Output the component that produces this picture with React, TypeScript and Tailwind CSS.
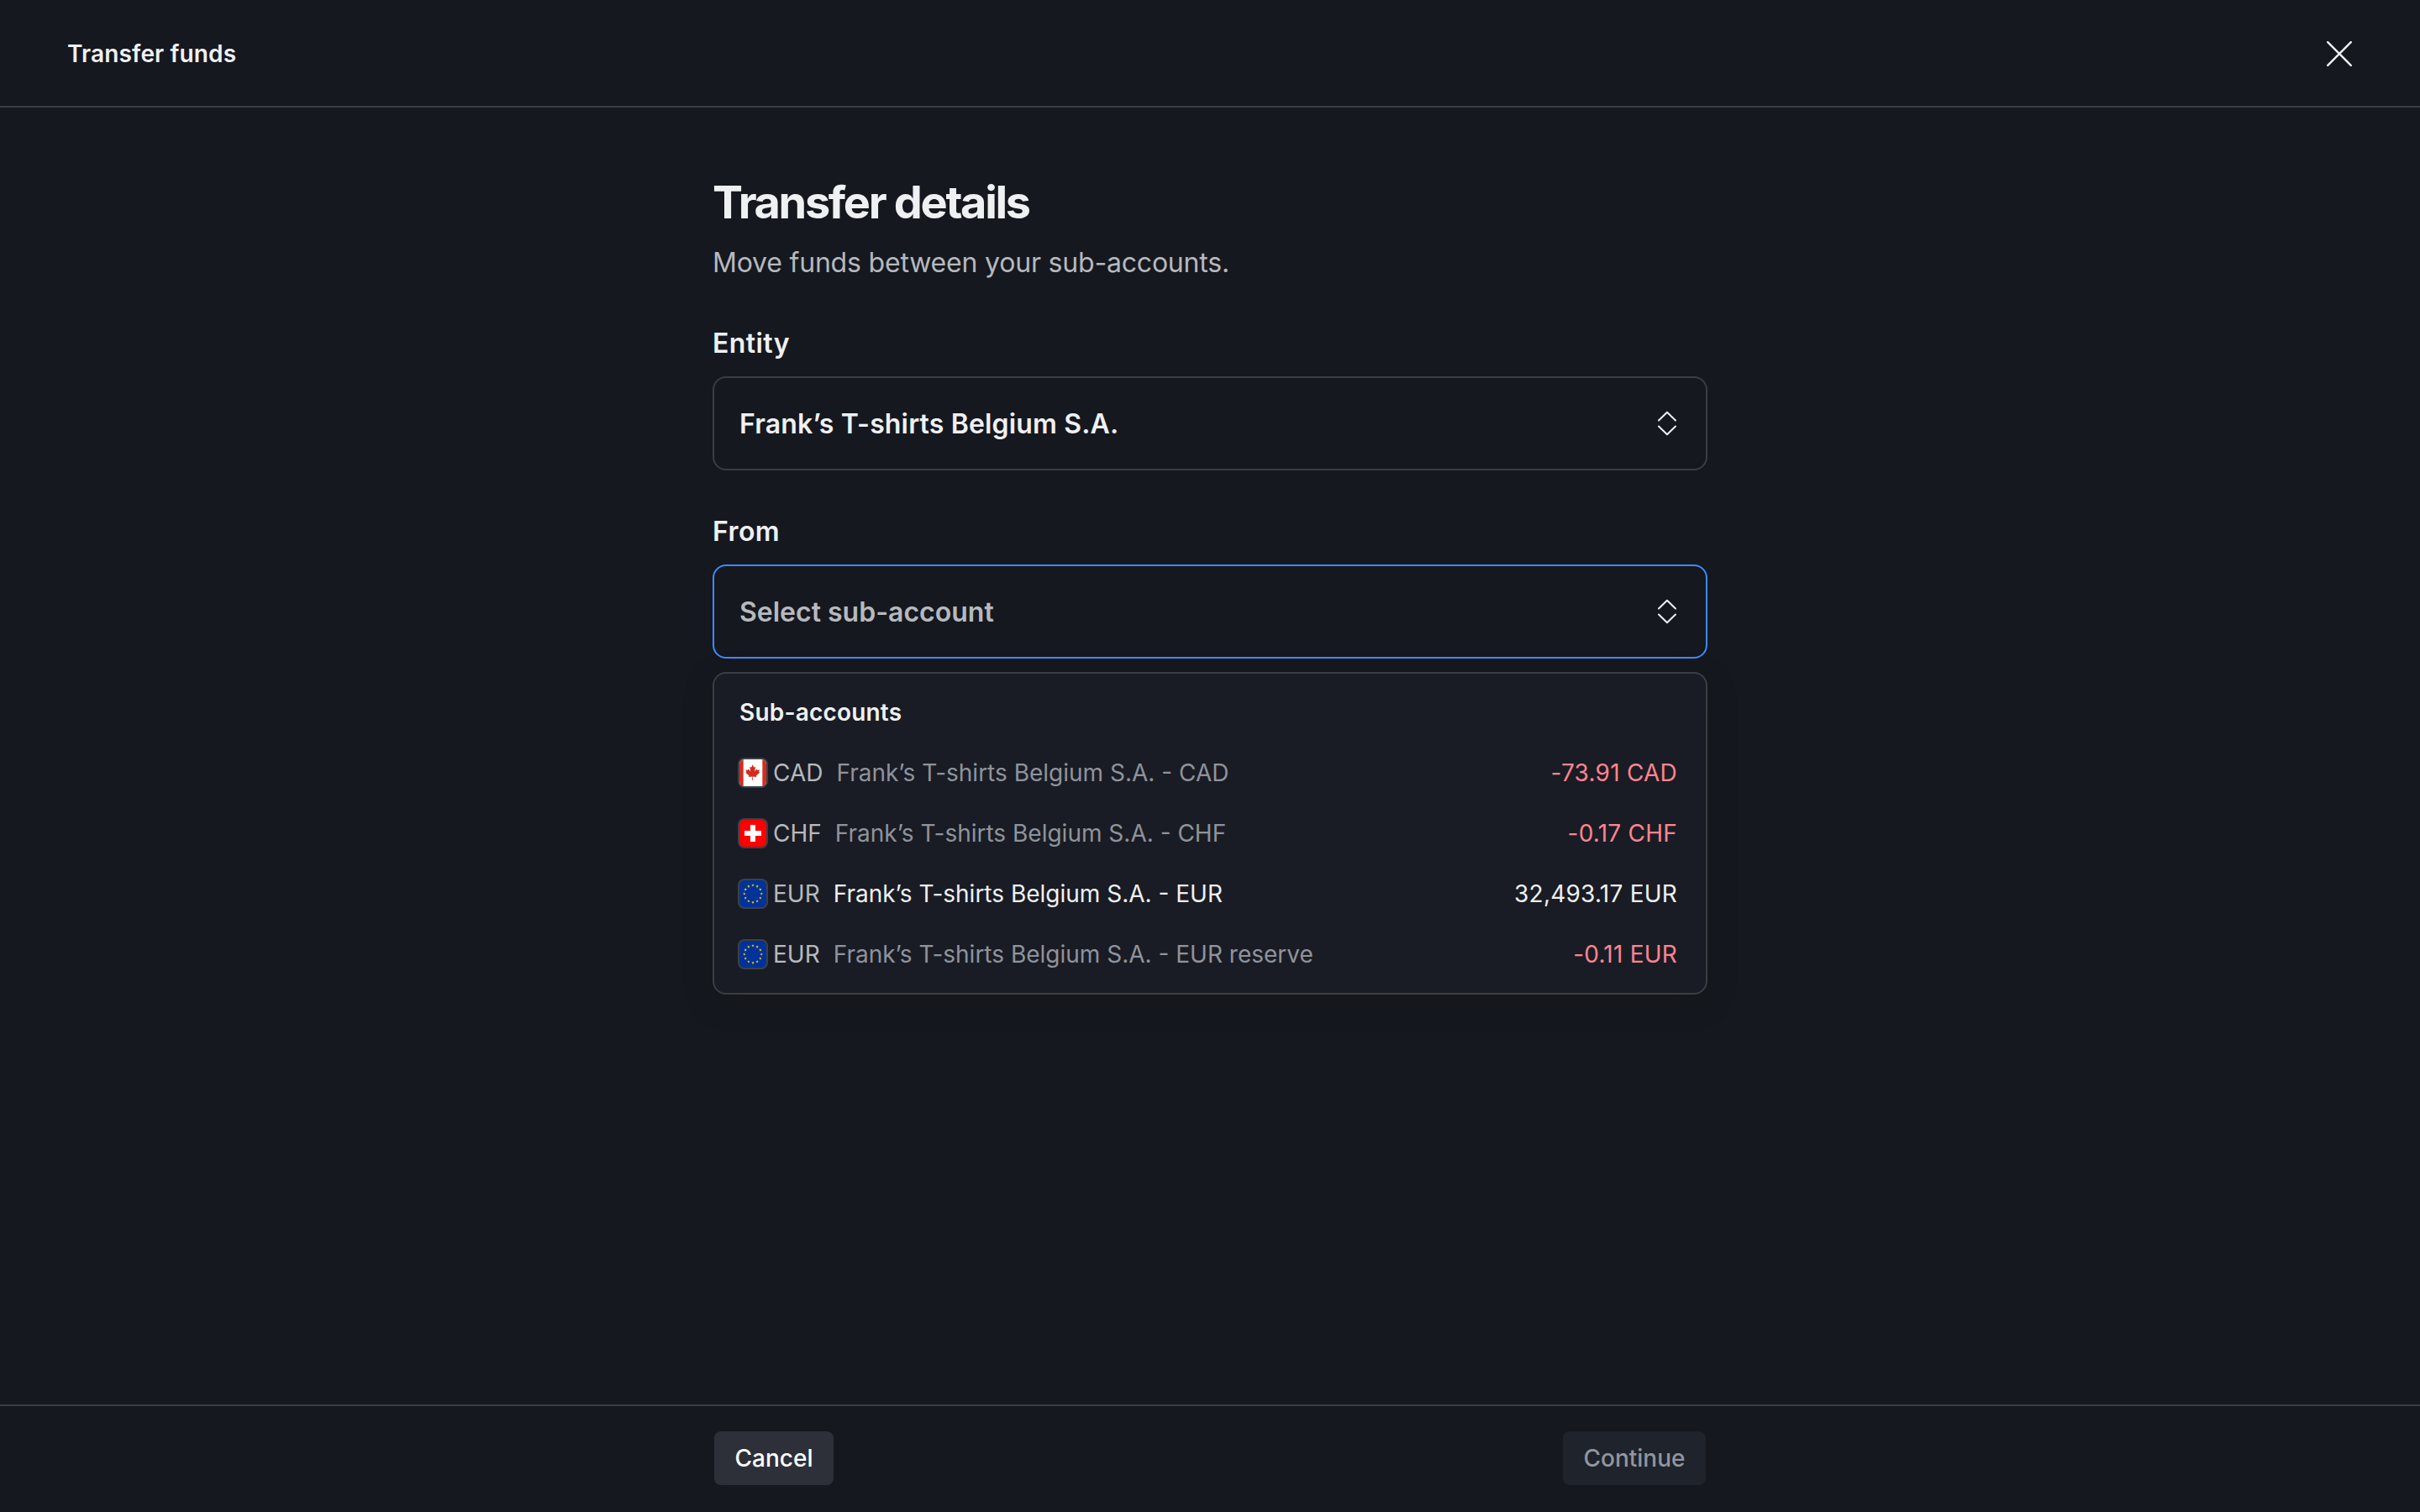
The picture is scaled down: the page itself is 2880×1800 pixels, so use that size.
import { ReactNode, useState } from 'react'

type Account = {
  id: string
  currency: string
  name: string
  balance: string
  flag: 'ca' | 'ch' | 'eu'
  negative?: boolean
}

const ACCOUNTS: Account[] = [
  { id: 'cad', currency: 'CAD', name: 'Frank’s T-shirts Belgium S.A. - CAD', balance: '-73.91 CAD', flag: 'ca', negative: true },
  { id: 'chf', currency: 'CHF', name: 'Frank’s T-shirts Belgium S.A. - CHF', balance: '-0.17 CHF', flag: 'ch', negative: true },
  { id: 'eur', currency: 'EUR', name: 'Frank’s T-shirts Belgium S.A. - EUR', balance: '32,493.17 EUR', flag: 'eu' },
  { id: 'eur-reserve', currency: 'EUR', name: 'Frank’s T-shirts Belgium S.A. - EUR reserve', balance: '-0.11 EUR', flag: 'eu', negative: true },
]

// five-pointed star around 0,0
const STAR = '0,-22 5.2,-7.1 20.9,-6.8 8.4,2.7 12.9,17.8 0,8.8 -12.9,17.8 -8.4,2.7 -20.9,-6.8 -5.2,-7.1'

function Flag({ code }: { code: Account['flag'] }) {
  return (
    <span className="block size-9 shrink-0 rounded-lg bg-[#3d4047] p-0.5">
      <svg viewBox="80 0 480 480" className="size-8 rounded-md">
        {code === 'ca' && (
          <>
            <path fill="#fff" d="M80 0h480v480H80z" />
            <path
              fill="#d52b1e"
              d="M-19.7 0h169.8v480H-19.7zm509.5 0h169.8v480H489.9zM201 232l-13.3 4.4 61.4 54c4.7 13.7-1.6 17.8-5.6 25l66.6-8.4-1.6 67 13.9-.3-3.1-66.6 66.7 8c-4.1-8.7-7.8-13.3-4-27.2l61.3-51-10.7-4c-8.8-6.8 3.8-32.6 5.6-48.9 0 0-35.7 12.3-38 5.8l-9.2-17.5-32.6 35.8c-3.5.9-5-.5-5.9-3.5l15-74.8-23.8 13.4c-2 .9-4 .1-5.2-2.2l-23-46-23.6 47.8c-1.8 1.7-3.6 1.9-5 .7L264 130.8l13.7 74.1c-1.1 3-3.7 3.8-6.7 2.2l-31.2-35.3c-4 6.5-6.8 17.1-12.2 19.5-5.4 2.3-23.5-4.5-35.6-7 4.2 14.8 17 39.6 9 47.7z"
            />
          </>
        )}
        {code === 'ch' && (
          <>
            <path fill="#f00" d="M80 0h480v480H80z" />
            <path fill="#fff" d="M170 195h300v90H170zM275 90h90v300h-90z" />
          </>
        )}
        {code === 'eu' && (
          <>
            <path fill="#039" d="M80 0h480v480H80z" />
            {Array.from({ length: 12 }, (_, i) => {
              const a = (i * Math.PI) / 6
              return (
                <polygon key={i} points={STAR} fill="#fc0"
                  transform={`translate(${320 + 153 * Math.sin(a)} ${240 - 153 * Math.cos(a)}) scale(1.25)`} />
              )
            })}
          </>
        )}
      </svg>
    </span>
  )
}

function UpDownIcon() {
  return (
    <svg viewBox="0 0 32 32" className="size-8 text-[#eff0f2]" fill="none" stroke="currentColor" strokeWidth="2" strokeLinecap="round" strokeLinejoin="round">
      <path d="M6 12.5 16 2.7l10 9.8M6 19.5l10 9.8 10-9.8" />
    </svg>
  )
}

function Select({ label, open, onClick, children }: { label: string; open?: boolean; onClick?: () => void; children: ReactNode }) {
  return (
    <>
      <p className="mt-12 pt-0.5 text-[32px] leading-[46px] font-semibold tracking-[0.013em]">{label}</p>
      <button onClick={onClick}
        className={`mt-4 flex h-28 w-full items-center justify-between rounded-2xl border-2 px-[30px] text-left text-[32px] font-semibold ${
          open ? 'border-[#3d8bff]' : 'border-[#3a3d44]'
        }`}>
        {children}
        <UpDownIcon />
      </button>
    </>
  )
}

export default function App() {
  const [open, setOpen] = useState(true)

  return (
    <div className="flex h-[1800px] w-[2880px] flex-col bg-[#15181f] font-['Inter',sans-serif] text-[#eff0f2]">
      {/* Header */}
      <header className="flex h-32 items-center justify-between border-b-2 border-[#3a3d44] px-20 pt-0.5">
        <h1 className="text-[28px] font-semibold tracking-[0.005em]">Transfer funds</h1>
        <button aria-label="Close">
          <svg viewBox="0 0 32 32" className="size-8" fill="none" stroke="currentColor" strokeWidth="2.4" strokeLinecap="round">
            <path d="m2.2 2.2 27.6 27.6m0-27.6L2.2 29.8" />
          </svg>
        </button>
      </header>

      {/* Form */}
      <main className="mx-auto w-[1184px] flex-1 pt-20">
        <h2 className="text-[54px] leading-[65px] font-bold tracking-[-0.043em]">Transfer details</h2>
        <p className="mt-4 text-[32px] leading-[47px] tracking-[-0.006em] text-[#b6b9be]">Move funds between your sub-accounts.</p>

        <Select label="Entity">
          <span className="pt-0.5 tracking-[0.005em]">Frank’s T-shirts Belgium S.A.</span>
        </Select>

        <div className="relative">
          <Select label="From" open={open} onClick={() => setOpen(!open)}>
            <span className="pt-0.5 text-[#b6b9be]">Select sub-account</span>
          </Select>

          {open && (
            <div className="absolute top-full left-0 mt-4 w-full rounded-2xl border-2 border-[#3a3d44] bg-[#191c24] py-2.5 text-[28px] shadow-[0_10px_32px_rgba(22,22,16,0.35)]">
              <p className="flex h-18 items-center px-[30px] font-semibold tracking-[0.007em]">Sub-accounts</p>
              {ACCOUNTS.map(a => (
                <div key={a.id} className="flex h-18 items-center pr-[34px] pl-7">
                  <Flag code={a.flag} />
                  <span className="ml-1.5 text-[#b6b9be]">{a.currency}</span>
                  <span className={`ml-4 ${a.negative ? 'text-[#8f939c]' : ''}`}>{a.name}</span>
                  <span className={`ml-auto tracking-[0.008em] ${a.negative ? 'text-[#ff8490]' : ''}`}>{a.balance}</span>
                </div>
              ))}
            </div>
          )}
        </div>
      </main>

      {/* Footer */}
      <footer className="h-32 border-t-2 border-[#3a3d44] pt-[30px]">
        <div className="mx-auto flex w-[1180px] justify-between text-[28px] font-medium">
          <button className="h-16 w-[142px] rounded-lg bg-[#2d3038] text-white">Cancel</button>
          <button disabled className="h-16 w-[170px] rounded-lg bg-[#1f232b] text-[#9296a0]">Continue</button>
        </div>
      </footer>
    </div>
  )
}
